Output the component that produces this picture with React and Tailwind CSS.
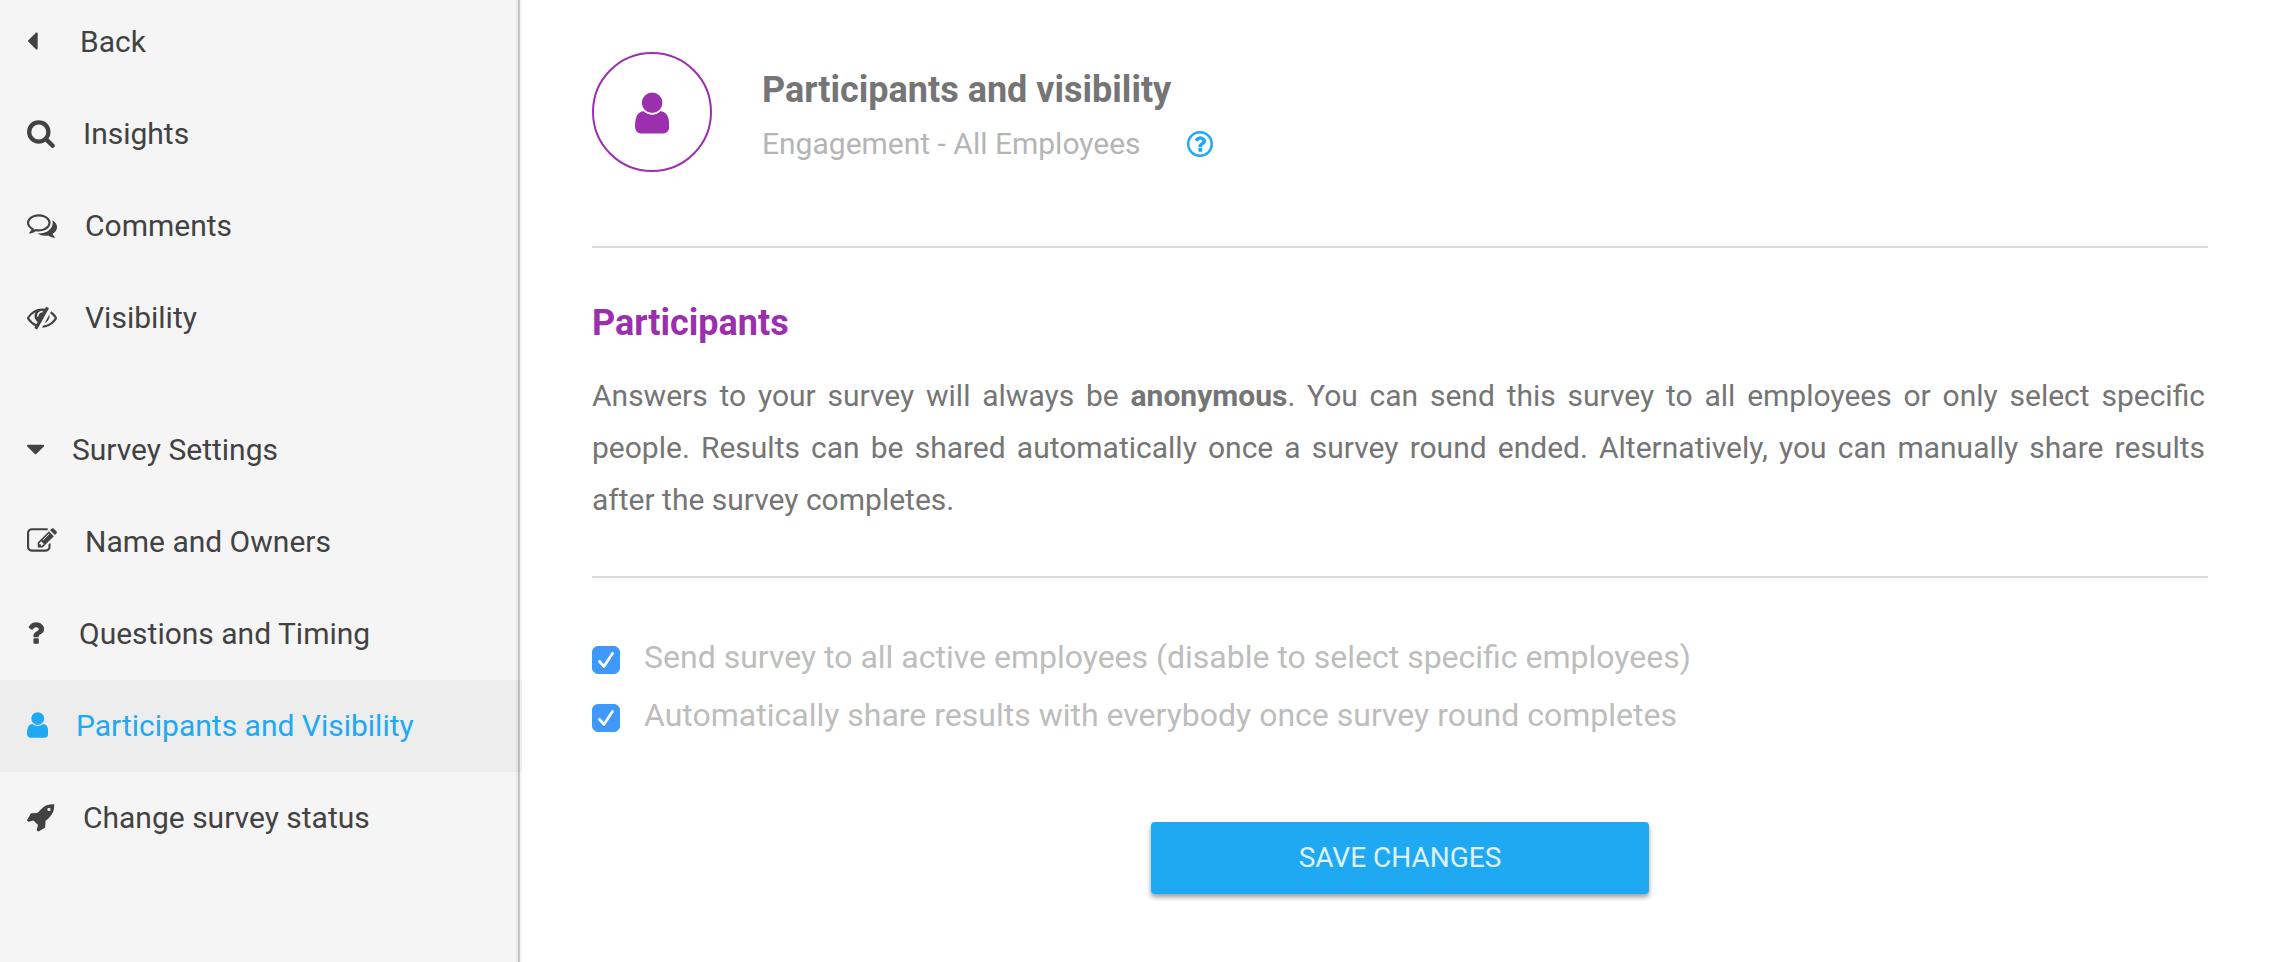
import React, { useState } from 'react';
import clsx from 'clsx';

const ICONS = {
    caretLeft: {
        viewBox: '576 0 640 1792',
        d: 'M1216 448v896q0 26-19 45t-45 19-45-19l-448-448q-19-19-19-45t19-45l448-448q19-19 45-19t45 19 19 45z',
    },
    search: {
        viewBox: '64 0 1664 1792',
        d: 'M1216 832q0-185-131.5-316.5t-316.5-131.5-316.5 131.5-131.5 316.5 131.5 316.5 316.5 131.5 316.5-131.5 131.5-316.5zm512 832q0 52-38 90t-90 38q-54 0-90-38l-343-342q-179 124-399 124-143 0-273.5-55.5t-225-150-150-225-55.5-273.5 55.5-273.5 150-225 225-150 273.5-55.5 273.5 55.5 225 150 150 225 55.5 273.5q0 220-124 399l343 343q37 37 37 90z',
    },
    comments: {
        viewBox: '0 0 1792 1792',
        d: 'M704 384q-153 0-286 52t-211.5 141-78.5 191q0 82 53 158t149 132l97 56-35 84q34-20 62-39l44-31 53 10q78 14 153 14 153 0 286-52t211.5-141 78.5-191-78.5-191-211.5-141-286-52zm0-128q191 0 353.5 68.5t256.5 186.5 94 257-94 257-256.5 186.5-353.5 68.5q-86 0-176-16-124 88-278 128-36 9-86 16h-3q-11 0-20.5-8t-11.5-21q-1-3-1-6.5t.5-6.5 2-6l2.5-5 3.5-5.5 4-5 4.5-5 4-4.5q5-6 23-25t26-29.5 22.5-29 25-38.5 20.5-44q-124-72-195-177t-71-224q0-139 94-257t256.5-186.5 353.5-68.5zm822 1169q10 24 20.5 44t25 38.5 22.5 29 26 29.5 23 25q1 1 4 4.5t4.5 5 4 5 3.5 5.5l2.5 5 2 6 .5 6.5-1 6.5q-3 14-13 22t-22 7q-50-7-86-16-154-40-278-128-90 16-176 16-271 0-472-132 58 4 88 4 161 0 309-45t264-129q125-92 192-212t67-254q0-77-23-152 129 71 204 178t75 230q0 120-71 224.5t-195 176.5z',
    },
    eyeSlash: {
        viewBox: '0 0 1792 1792',
        d: 'M555 1335l78-141q-87-63-136-159t-49-203q0-121 61-225-229 117-381 353 167 258 427 375zm389-759q0-20-14-34t-34-14q-125 0-214.5 89.5t-89.5 214.5q0 20 14 34t34 14 34-14 14-34q0-86 61-147t147-61q20 0 34-14t14-34zm363-191q0 7-1 9-106 189-316 567t-315 566l-49 89q-10 16-28 16-12 0-134-70-16-10-16-28 0-12 44-87-143-65-263.5-173t-208.5-245q-20-31-20-69t20-69q153-235 380-371t496-136q89 0 180 17l54-97q10-16 28-16 5 0 18 6t31 15.5 33 18.5 31.5 18.5 19.5 11.5q16 10 16 27zm37 447q0 139-79 253.5t-209 164.5l280-502q8 45 8 84zm448 128q0 35-20 69-39 64-109 145-150 172-347.5 267t-419.5 95l74-132q212-18 392.5-137t301.5-307q-115-179-282-294l63-112q95 64 182.5 153t144.5 184q20 34 20 69z',
    },
    caretDown: {
        viewBox: '384 0 1024 1792',
        d: 'M1408 704q0 26-19 45l-448 448q-19 19-45 19t-45-19l-448-448q-19-19-19-45t19-45 45-19h896q26 0 45 19t19 45z',
    },
    edit: {
        viewBox: '0 0 1792 1792',
        d: 'M888 1184l116-116-152-152-116 116v56h96v96h56zm440-720q-16-16-33 1l-350 350q-17 17-1 33t33-1l350-350q17-17 1-33zm80 594v190q0 119-84.5 203.5t-203.5 84.5h-832q-119 0-203.5-84.5t-84.5-203.5v-832q0-119 84.5-203.5t203.5-84.5h832q63 0 117 25 15 7 18 23 3 17-9 29l-49 49q-14 14-32 8-23-6-45-6h-832q-66 0-113 47t-47 113v832q0 66 47 113t113 47h832q66 0 113-47t47-113v-126q0-13 9-22l64-64q15-15 35-7t20 29zm-96-738l288 288-672 672h-288v-288zm444 132l-92 92-288-288 92-92q28-28 68-28t68 28l152 152q28 28 28 68t-28 68z',
    },
    question: {
        viewBox: '384 0 1024 1792',
        d: 'M1088 1256v240q0 16-12 28t-28 12h-240q-16 0-28-12t-12-28v-240q0-16 12-28t28-12h240q16 0 28 12t12 28zm316-600q0 54-15.5 101t-35 76.5-55 59.5-57.5 43.5-61 35.5q-41 23-68.5 65t-27.5 67q0 17-12 32.5t-28 15.5h-240q-15 0-25.5-18.5t-10.5-37.5v-45q0-83 65-156.5t143-108.5q59-27 84-56t25-76q0-42-46.5-74t-107.5-32q-65 0-108 29-35 25-107 115-13 16-31 16-12 0-25-8l-164-125q-13-10-15.5-25t5.5-28q160-266 464-266 80 0 161 31t146 83 106 127.5 41 158.5z',
    },
    user: {
        viewBox: '256 0 1280 1792',
        d: 'M1536 1399q0 109-62.5 187t-150.5 78h-854q-88 0-150.5-78t-62.5-187q0-85 8.5-160.5t31.5-152 58.5-131 94-89 134.5-34.5q131 128 313 128t313-128q76 0 134.5 34.5t94 89 58.5 131 31.5 152 8.5 160.5zm-256-887q0 159-112.5 271.5t-271.5 112.5-271.5-112.5-112.5-271.5 112.5-271.5 271.5-112.5 271.5 112.5 112.5 271.5z',
    },
    rocket: {
        viewBox: '32 0 1664 1792',
        d: 'M1440 448q0-40-28-68t-68-28-68 28-28 68 28 68 68 28 68-28 28-68zm224-288q0 249-75.5 430.5t-253.5 360.5q-81 80-195 176l-20 379q-2 16-16 26l-384 224q-7 4-16 4-12 0-23-9l-64-64q-13-14-8-32l85-276-281-281-276 85q-3 1-9 1-14 0-23-9l-64-64q-17-19-5-39l224-384q10-14 26-16l379-20q96-114 176-195 188-187 358-258t431-71q14 0 24 9.5t10 22.5z',
    },
};

const Icon = ({ name, className }) => (
    <svg viewBox={ICONS[name].viewBox} className={clsx("shrink-0 fill-current", className)} aria-hidden="true">
        <path d={ICONS[name].d} />
    </svg>
);

const HelpIcon = () => (
    <svg viewBox="0 0 26 26" className="w-[26px] h-[26px]" aria-hidden="true">
        <circle cx="13" cy="13" r="11.8" fill="none" stroke="currentColor" strokeWidth="2.4" />
        <path d={ICONS.question.d} fill="currentColor" transform="translate(2.2 2.2) scale(0.012)" />
    </svg>
);

const NavItem = ({ icon, iconBox, label, active, className }) => (
    <a
        href="#"
        className={clsx(
            "flex items-center gap-7 pl-[27px] text-[30px]",
            active ? "bg-[#ededed] text-[#1ea9f2]" : "text-[#424242]",
            className || "h-[92px] pb-0.5"
        )}
    >
        <span className={clsx("flex shrink-0", iconBox)}>
            <Icon name={icon} className="h-[30px]" />
        </span>
        <span>{label}</span>
    </a>
);

const CheckRow = ({ id, label, checked, onChange }) => (
    <div className="flex items-center gap-6 h-[58px]">
        <span className="grid shrink-0 mt-1.5">
            <input
                id={id}
                type="checkbox"
                checked={checked}
                onChange={onChange}
                className="appearance-none col-start-1 row-start-1 w-7 h-7 rounded-md border border-[#bdbdbd] checked:bg-[#3f99fa] checked:border-[#3f99fa]"
            />
            {checked && (
                <svg viewBox="0 0 28 28" className="col-start-1 row-start-1 w-7 h-7 pointer-events-none" aria-hidden="true">
                    <path d="M7.5 16.6l4.5 5L20.5 8.6" fill="none" stroke="#2f7fd6" strokeWidth="2.8" strokeLinecap="round" strokeLinejoin="round" opacity="0.6" />
                    <path d="M7.5 15.5l4.5 5L20.5 7.5" fill="none" stroke="#fff" strokeWidth="2.8" strokeLinecap="round" strokeLinejoin="round" />
                </svg>
            )}
        </span>
        <label htmlFor={id} className="text-[32px] leading-10 text-[#bdbdbd]">{label}</label>
    </div>
);

const App = () => {
    const [sendAll, setSendAll] = useState(true);
    const [autoShare, setAutoShare] = useState(true);

    return (
        <div className="min-h-screen flex bg-white font-['Roboto',sans-serif]">
            {/* Sidebar */}
            <aside className="relative w-[522px] shrink-0 bg-[#f5f5f5]">
                <nav>
                    <NavItem icon="caretLeft" iconBox="w-[25px]" label="Back" className="h-[88px] pb-1.5" />
                    <NavItem icon="search" iconBox="w-7" label="Insights" />
                    <NavItem icon="comments" iconBox="w-[30px]" label="Comments" />
                    <NavItem icon="eyeSlash" iconBox="w-[30px]" label="Visibility" />
                    <div className="mt-10">
                        <NavItem icon="caretDown" iconBox="w-[17px]" label="Survey Settings" />
                        <NavItem icon="edit" iconBox="w-[30px]" label="Name and Owners" />
                        <NavItem icon="question" iconBox="w-6" label="Questions and Timing" />
                        <NavItem icon="user" iconBox="w-[21px]" label="Participants and Visibility" active />
                        <NavItem icon="rocket" iconBox="w-7" label="Change survey status" />
                    </div>
                </nav>
                {/* Edge shadow, drawn over the active row as well */}
                <div className="absolute inset-y-0 right-0.5 w-1 border-r-2 border-black/15 bg-black/5 pointer-events-none" />
            </aside>

            {/* Main content */}
            <main className="flex-1 pl-[70px] pr-16 pt-[52px]">
                <header className="flex items-start gap-[50px] pb-[74px] border-b-2 border-[#dcdcdc]">
                    <div className="w-[120px] h-[120px] pt-0.5 shrink-0 rounded-full border-2 border-[#9b2fae] text-[#9b2fae] flex items-center justify-center">
                        <Icon name="user" className="h-12" />
                    </div>
                    <div className="pt-[13px]">
                        <h1 className="text-[36px] leading-[50px] font-bold text-[#757575]">Participants and visibility</h1>
                        <div className="flex items-center gap-[46px] pt-1">
                            <p className="text-[30px] leading-[50px] text-[#b5b5b5]">Engagement - All Employees</p>
                            <button type="button" aria-label="Help" className="text-[#1ea9f2]">
                                <HelpIcon />
                            </button>
                        </div>
                    </div>
                </header>

                <section className="pt-[50px] pb-[50px] border-b-2 border-[#dcdcdc]">
                    <h2 className="text-[36px] leading-[50px] font-bold text-[#9b2fae]">Participants</h2>
                    <p className="mt-[22px] pr-[3px] text-[30px] leading-[52px] text-justify text-[#757575]">
                        Answers to your survey will always be <strong className="font-bold">anonymous</strong>. You can send this
                        survey to all employees or only select specific people. Results can be shared automatically once a survey
                        round ended. Alternatively, you can manually share results after the survey completes.
                    </p>
                </section>

                <form className="pt-[50px]" onSubmit={(e) => e.preventDefault()}>
                    <CheckRow
                        id="send-all"
                        label="Send survey to all active employees (disable to select specific employees)"
                        checked={sendAll}
                        onChange={() => setSendAll(!sendAll)}
                    />
                    <CheckRow
                        id="auto-share"
                        label="Automatically share results with everybody once survey round completes"
                        checked={autoShare}
                        onChange={() => setAutoShare(!autoShare)}
                    />
                    <div className="flex justify-center pt-[78px]">
                        <button
                            type="submit"
                            className="w-[498px] h-[72px] rounded-sm bg-[#1ea9f2] text-[28px] text-white/85 shadow-[0_3px_5px_rgba(0,0,0,0.4)]"
                        >
                            SAVE CHANGES
                        </button>
                    </div>
                </form>
            </main>
        </div>
    );
};

export default App;
